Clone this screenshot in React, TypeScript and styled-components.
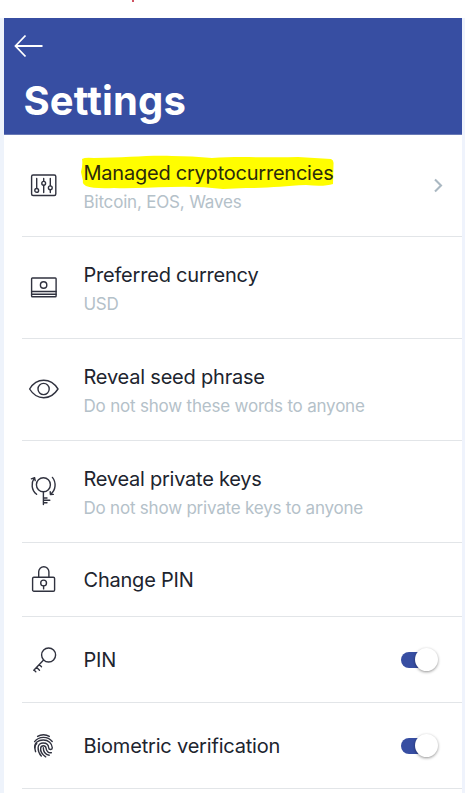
import React from "react";
import styled, { createGlobalStyle } from "styled-components";

const GlobalStyle = createGlobalStyle`
  * { box-sizing: border-box; }
  body { margin: 0; background: #fff; overflow: hidden; font-family: Inter, "Liberation Sans", sans-serif; }
`;

const Page = styled.div`
  height: 793px;
  display: flex;
  flex-direction: column;
`;

const TopMargin = styled.div`
  height: 18px;
  flex: none;
  padding-left: 132px;
`;

const RedMark = styled.div`
  width: 2px;
  height: 2px;
  background: #cf5262;
`;

const Frame = styled.div`
  flex: 1;
  display: flex;
  flex-direction: column;
  border-left: 4px solid #eef3fb;
  border-right: 3px solid #eff3fc;
`;

const Header = styled.header`
  height: 117px;
  flex: none;
  padding: 16px 0 0 10px;
  background: #374ea2;
  border-bottom: 1px solid #6879b5;
  color: #fff;
`;

const BackArrow = styled.svg`
  display: block;
  width: 30px;
  height: 24px;
`;

const Title = styled.h1`
  margin: 18px 0 0 9.5px;
  font-size: 40px;
  line-height: 50px;
  font-weight: 700;
  letter-spacing: 0.15px;
`;

const Row = styled.div<{ $height: number }>`
  height: ${(p) => p.$height}px;
  flex: none;
  margin-left: 18px;
  padding-left: 6px;
  padding-right: 18px;
  display: flex;
  align-items: center;
  border-bottom: 1px solid #e2e5e8;
`;

const Icon = styled.svg`
  width: 33px;
  height: 33px;
  flex: none;
  fill: none;
  stroke: #30323f;
  stroke-width: 1.4;
  stroke-linecap: round;
  stroke-linejoin: round;
`;

const Texts = styled.div<{ $offset: number }>`
  flex: 1;
  margin-left: 22.5px;
  padding-top: ${(p) => p.$offset}px;
  white-space: nowrap;
`;

const Label = styled.div<{ $spacing: number; $marked: boolean }>`
  position: relative;
  font-size: 20px;
  line-height: 26px;
  color: ${(p) => (p.$marked ? "#2b2a0c" : "#20242e")};
  letter-spacing: ${(p) => p.$spacing}px;
`;

const LabelText = styled.span`
  position: relative;
`;

const Hint = styled.div<{ $spacing: number }>`
  margin-top: 4px;
  font-size: 17px;
  line-height: 24px;
  color: #b4c1c9;
  letter-spacing: ${(p) => p.$spacing}px;
`;

const Marker = styled.svg`
  position: absolute;
  left: -3.5px;
  top: -6px;
  width: 256px;
  height: 36px;
  fill: #fffd00;
`;

const Chevron = styled.svg`
  width: 12px;
  height: 17px;
  fill: none;
  stroke: #aab8c2;
  stroke-width: 2.1;
`;

const Toggle = styled.div`
  width: 37px;
  height: 16px;
  margin-right: 6px;
  display: flex;
  align-items: center;
  justify-content: flex-end;
  border-radius: 8px;
  background: linear-gradient(to right, #374ea2 24px, transparent 24px);
`;

const Thumb = styled.div`
  width: 23px;
  height: 23px;
  flex: none;
  border-radius: 50%;
  background: #fff;
  box-shadow: 0 1px 3px rgba(0, 0, 0, 0.42);
`;

const SlidersIcon = () => (
  <Icon viewBox="0 0 33 33">
    <rect x="3.6" y="6" width="24.2" height="20.5" rx="1.5" />
    <path d="M8.7 9.5v9.8M15.7 9.5v2.8M15.7 16.5v7M22.3 9.5v7.2M22.3 21v2.5" />
    <circle cx="8.7" cy="21.4" r="1.9" />
    <circle cx="15.7" cy="14.3" r="1.9" />
    <circle cx="22.3" cy="18.8" r="1.9" />
  </Icon>
);

const BanknoteIcon = () => (
  <Icon viewBox="0 0 33 33">
    <rect x="3.6" y="7" width="24.5" height="18.8" rx="0.8" />
    <circle cx="15.6" cy="14" r="3.2" />
    <path d="M3.6 20.5h24.5M3.6 23.2h24.5" />
  </Icon>
);

const EyeIcon = () => (
  <Icon viewBox="0 0 33 33">
    <path d="M1.6 16C5 10.5 10 7.3 15.7 7.3S26.5 10.5 30 16C26.5 21.5 21.5 24.7 15.7 24.7S5 21.5 1.6 16Z" />
    <circle cx="15.6" cy="16" r="5.6" />
  </Icon>
);

const KeyRotateIcon = () => (
  <Icon viewBox="0 0 33 33">
    <circle cx="15.4" cy="9.8" r="7" />
    <path d="M15.4 16.8v12.7M15.4 23h3.6M15.4 25.2h6.4M15.4 27.7h3.6" />
    <path d="M6.3 2.8C3 7.800 3.200 15.200 8.600 19.300M3.400 3.800L6.600 2.600L7.200 5.600" />
    <path d="M24.4 2.4C28.4 7.4 28 15.200 22.600 19.200M22.200 16.600L22.400 19.500L25.300 19.400" />
  </Icon>
);

const LockIcon = () => (
  <Icon viewBox="0 0 33 33">
    <rect x="4.6" y="14.2" width="22" height="14" rx="1.3" />
    <path d="M10.7 14.2V8.8a5.1 5.1 0 0 1 10.2 0v5.4" />
    <circle cx="15.6" cy="20" r="2.9" />
    <path d="M15.6 22.9v3" />
  </Icon>
);

const KeyIcon = () => (
  <Icon viewBox="0 0 33 33">
    <circle cx="20.6" cy="12" r="7" />
    <path d="M15.6 17L5.8 27.2M11.2 21.5l2.3 2.3M8.5 24.3l3 3M6 27l1.8 1.7" />
  </Icon>
);

const FingerprintIcon = () => (
  <Icon viewBox="0 0 33 33">
    <path d="M9.6 7.4C13 5.2 18 5.2 21.3 7.4" />
    <path d="M6.6 12.6C11 7 19.8 7 24.2 12.5" />
    <path d="M6.7 18.7C6.3 13.6 10.2 11 15.3 11C20.5 11 24 14.5 24.3 18.7C24.4 20.8 21 21.3 20.7 18.8C20.2 12.5 10.3 12.3 10.1 18.7C10 22 11.5 25 13.3 27" />
    <path d="M7.6 22.7C6.5 19.5 7 16.2 8.8 14.6" />
    <path d="M17.7 27.8C14 25.5 12.2 22.3 12.7 18.9C13.2 16.1 17.5 16.1 18 18.9C18.3 22 20.3 24.2 23.4 23.7" />
    <path d="M15.3 18.8C15.3 22.7 17.5 25.7 21.2 26.2" />
  </Icon>
);

const Highlight = () => (
  <Marker viewBox="0 0 256 36">
    <path d="M2 5Q5 3 14 4C45 4 68 1 92 2Q112 2 132 4C158 2 188 4 218 3L251 5Q254 6 253.5 10L253 30Q244 33 226 31C204 32 190 34 166 34L143 35Q118 32 91 33C70 33 52 35 34 34Q14 35 6 32Q2 30 3 27L1 18Q3 10 2 5Z" />
  </Marker>
);

const Switch = () => (
  <Toggle role="switch" aria-checked="true">
    <Thumb />
  </Toggle>
);

type Item = {
  label: string;
  spacing: number;
  height: number;
  icon: React.ReactNode;
  hint?: string;
  hintSpacing?: number;
  marked?: boolean;
  end?: React.ReactNode;
};

const items: Item[] = [
  {
    label: "Managed cryptocurrencies", spacing: -0.23, height: 102, icon: <SlidersIcon />,
    hint: "Bitcoin, EOS, Waves", hintSpacing: -0.18, marked: true,
    end: <Chevron viewBox="0 0 12 17"><path d="M3 2.5L9 8.5L3 14.5" /></Chevron>,
  },
  { label: "Preferred currency", spacing: -0.21, height: 102, icon: <BanknoteIcon />, hint: "USD", hintSpacing: -0.3 },
  { label: "Reveal seed phrase", spacing: -0.21, height: 102, icon: <EyeIcon />, hint: "Do not show these words to anyone", hintSpacing: -0.2 },
  { label: "Reveal private keys", spacing: -0.25, height: 102, icon: <KeyRotateIcon />, hint: "Do not show private keys to anyone", hintSpacing: -0.21 },
  { label: "Change PIN", spacing: -0.22, height: 74, icon: <LockIcon /> },
  { label: "PIN", spacing: -0.2, height: 86, icon: <KeyIcon />, end: <Switch /> },
  { label: "Biometric verification", spacing: -0.19, height: 86, icon: <FingerprintIcon />, end: <Switch /> },
];

export default function App() {
  return (
    <Page>
      <GlobalStyle />
      <TopMargin><RedMark /></TopMargin>
      <Frame>
        <Header>
          <BackArrow viewBox="0 0 30 24" fill="none" stroke="#fff" strokeWidth="1.8">
            <path d="M28.5 12H1.5M11.5 1.5L1.5 12L11.5 22.5" />
          </BackArrow>
          <Title>Settings</Title>
        </Header>
        {items.map((item) => (
          <Row key={item.label} $height={item.height}>
            {item.icon}
            <Texts $offset={item.hint ? 3 : 0}>
              <Label $spacing={item.spacing} $marked={!!item.marked}>
                {item.marked && <Highlight />}
                <LabelText>{item.label}</LabelText>
              </Label>
              {item.hint && <Hint $spacing={item.hintSpacing ?? 0}>{item.hint}</Hint>}
            </Texts>
            {item.end}
          </Row>
        ))}
      </Frame>
    </Page>
  );
}
